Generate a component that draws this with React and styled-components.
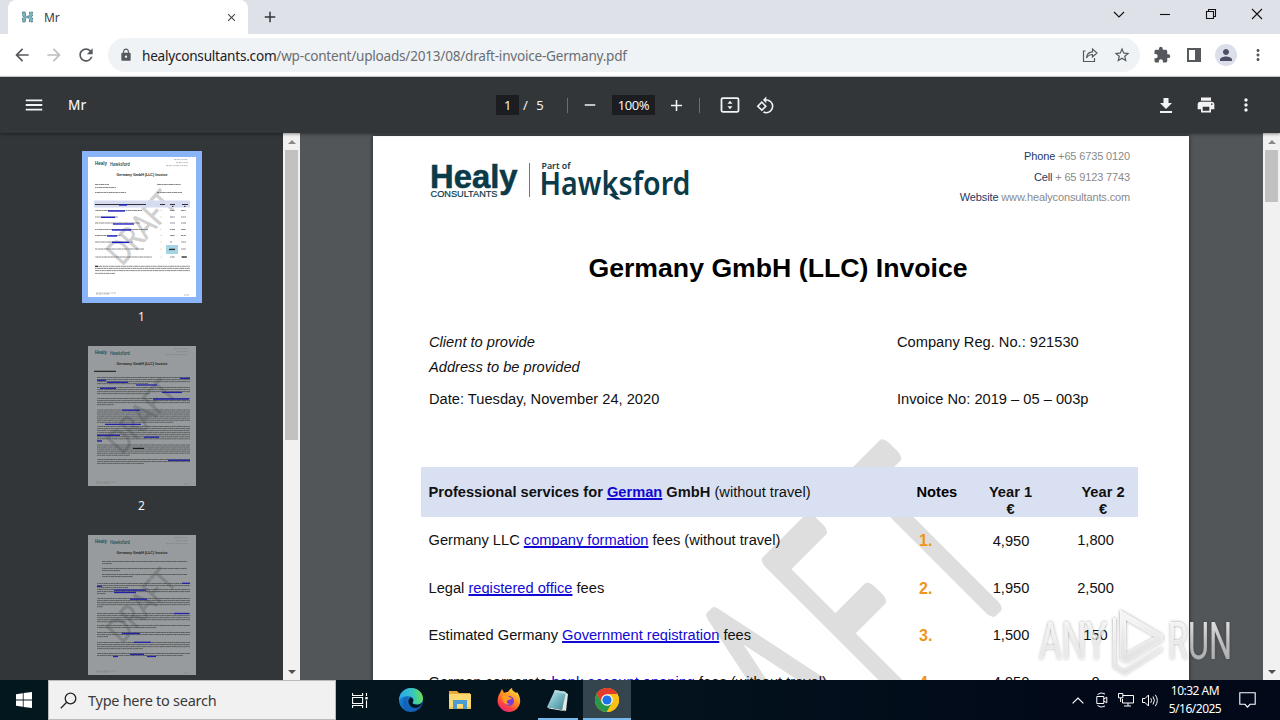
import React from "react";
import styled, { createGlobalStyle } from "styled-components";
import {
  MdMenu, MdArrowBack, MdArrowForward, MdRefresh, MdLock, MdExtension, MdPerson,
  MdMoreVert, MdStarBorder, MdPrint, MdAdd, MdRemove, MdRotate90DegreesCcw, MdClose,
} from "react-icons/md";

const ui = `"Noto Sans", "Open Sans", sans-serif`;
const doc = `"Liberation Sans", Arial, sans-serif`;

const Global = createGlobalStyle`
  * { box-sizing: border-box; }
  body { margin: 0; overflow: hidden; }
  svg { display: block; flex: none; }
`;

const Screen = styled.div`
  position: relative;
  width: 1280px;
  height: 720px;
  display: flex;
  flex-direction: column;
  overflow: hidden;
  font-family: ${ui};
`;

/* ---------- browser chrome ---------- */
const TabStrip = styled.div`
  height: 34px;
  flex: none;
  display: flex;
  align-items: stretch;
  padding-left: 8px;
  background: #dee1e8;
`;
const Tab = styled.div`
  width: 240px;
  display: flex;
  align-items: center;
  padding: 0 10px 0 13px;
  border-radius: 8px 8px 0 0;
  background: #fff;
`;
const TabTitle = styled.span`
  flex: 1;
  margin-left: 10px;
  font-size: 12px;
  letter-spacing: -0.1px;
  color: #3c4043;
`;
const NewTab = styled.div`
  flex: 1;
  display: flex;
  align-items: center;
  padding-left: 13px;
  color: #33363a;
`;
const WindowButton = styled.div`
  width: 46px;
  display: flex;
  align-items: center;
  justify-content: center;
  padding-bottom: 6px;
`;
const AddressBar = styled.div`
  height: 43px;
  flex: none;
  display: flex;
  align-items: center;
  padding: 0 6px;
  background: #fff;
  border-bottom: 1px solid #d4d8da;
`;
const BarButton = styled.div`
  width: 32px;
  display: flex;
  justify-content: center;
  color: ${(p) => (p.$faded ? "#bcbec1" : "#55585c")};
`;
const Omnibox = styled.div`
  width: 1032px;
  height: 34px;
  margin-left: 6px;
  margin-right: 6px;
  padding: 0 2px 0 11px;
  display: flex;
  align-items: center;
  border-radius: 17px;
  background: #f0f3f5;
  color: #55585c;
`;
const Url = styled.div`
  flex: 1;
  margin-left: 9px;
  font-size: 13.6px;
  letter-spacing: -0.24px;
  white-space: nowrap;
  color: #6a6e73;
  b { font-weight: 400; color: #202124; }
`;
const Avatar = styled.div`
  width: 22px;
  height: 22px;
  border-radius: 50%;
  background: #dcdfe9;
  color: #4a4f66;
  display: flex;
  align-items: center;
  justify-content: center;
`;

/* ---------- pdf viewer ---------- */
const PdfBar = styled.div`
  height: 56px;
  flex: none;
  display: flex;
  align-items: center;
  background: #323639;
  color: #f1f3f4;
  font-size: 13px;
  z-index: 1;
  box-shadow: 0 1px 3px rgba(0, 0, 0, 0.45);
`;
const BarSlot = styled.div`
  width: ${(p) => p.$w}px;
  display: flex;
  align-items: center;
  justify-content: ${(p) => p.$align || "center"};
`;
const PageCount = styled.span`
  padding-left: 4px;
  word-spacing: 5px;
`;
const DocName = styled.div`
  width: 412px;
  font-size: 13.5px;
  font-weight: 500;
`;
const Field = styled.div`
  width: ${(p) => p.$w}px;
  height: 20px;
  display: flex;
  align-items: center;
  justify-content: center;
  background: #1b1d20;
  letter-spacing: -0.4px;
`;
const Divider = styled.div`
  width: 1px;
  height: 15px;
  background: #6c6f72;
`;
const Body = styled.div`
  height: 547px;
  flex: none;
  display: flex;
`;
const Sidebar = styled.div`
  width: 283px;
  display: flex;
  flex-direction: column;
  align-items: center;
  padding-top: 18px;
  background: #323639;
  color: #f1f3f4;
  font-size: 12px;
  overflow: hidden;
`;
const Thumb = styled.div`
  flex: none;
  height: ${(p) => (p.$active ? 152 : 140)}px;
  padding: ${(p) => (p.$active ? 6 : 0)}px;
  background: ${(p) => (p.$active ? "#8ab4f8" : "none")};
`;
const ThumbLabel = styled.div`
  flex: none;
  height: ${(p) => p.$h}px;
  padding-top: ${(p) => p.$top}px;
  line-height: 16px;
`;
const ScrollTrack = styled.div`
  width: 17px;
  flex: none;
  display: flex;
  flex-direction: column;
  align-items: center;
  background: #f1f1f1;
`;
const ScrollThumb = styled.div`
  width: 13px;
  height: ${(p) => p.$h}px;
  background: #c1c1c1;
`;
const Arrow = styled.div`
  width: 17px;
  height: 17px;
  display: flex;
  align-items: center;
  justify-content: center;
  margin-top: ${(p) => (p.$end ? "auto" : 0)};
`;
const Viewer = styled.div`
  width: 963px;
  display: flex;
  padding: 3px 0 0 73px;
  background: #525659;
  overflow: hidden;
`;

/* ---------- invoice sheet ---------- */
const Sheet = styled.div`
  position: relative;
  width: 816px;
  height: 1056px;
  flex: none;
  background: #fff;
  color: #111;
  font-family: ${doc};
  font-size: 14.67px;
  box-shadow: 0 0 4px rgba(0, 0, 0, 0.65);
`;
const Layer = styled.svg`
  position: absolute;
  left: 0;
  top: 0;
`;
const Content = styled.div`
  position: relative;
  display: flex;
  flex-direction: column;
`;
const Letterhead = styled.div`
  height: 102px;
  display: flex;
  justify-content: space-between;
  padding: 10px 59px 0 56px;
`;
const LogoBox = styled.div`
  padding-top: 12px;
`;
const Contacts = styled.div`
  display: flex;
  flex-direction: column;
  align-items: flex-end;
  font-size: 11px;
  letter-spacing: -0.14px;
  line-height: 20.5px;
  color: #8a8a8a;
  b { font-weight: 400; color: #1f3864; }
`;
const Title = styled.h1`
  margin: 0;
  height: 92px;
  padding: 15px 6px 0 0;
  text-align: center;
  font-size: 26.67px;
  line-height: 30px;
  color: #000;
`;
const MetaRow = styled.div`
  height: ${(p) => p.$h}px;
  display: flex;
  line-height: 24px;
  padding-left: 56px;
  font-style: ${(p) => (p.$italic ? "italic" : "normal")};
  span:first-child { width: 468px; }
`;
const Row = styled.div`
  height: ${(p) => p.$h}px;
  display: grid;
  grid-template-columns: 488px 56px 90px 83px;
  margin-left: 48px;
  width: 717px;
  padding-top: ${(p) => p.$top}px;
  line-height: 17px;
  font-weight: ${(p) => (p.$head ? 700 : 400)};
  background: ${(p) => (p.$head ? "#d9e0f2" : "transparent")};
`;
const Service = styled.div`
  padding-left: 7.5px;
  white-space: nowrap;
  span { font-weight: 400; }
`;
const Link = styled.a`
  color: #1208d4;
  text-decoration: underline;
  text-decoration-thickness: 2px;
  text-underline-offset: 1px;
  text-decoration-skip-ink: none;
`;
const Note = styled.div`
  padding-left: ${(p) => (p.$head ? 7.5 : 10)}px;
  color: ${(p) => (p.$head ? "#000" : "#f0941a")};
  font-size: ${(p) => (p.$head ? 14.67 : 16)}px;
  font-weight: 700;
`;
const Amount = styled.div`
  text-align: center;
  padding-left: ${(p) => p.$left || 0}px;
  padding-right: ${(p) => p.$right || 0}px;
  padding-top: ${(p) => p.$drop || 0}px;
`;

/* ---------- taskbar ---------- */
const Taskbar = styled.div`
  height: 40px;
  flex: none;
  display: flex;
  background: linear-gradient(90deg, #03171f 0%, #03131d 50%, #020919 85%);
  color: #fff;
`;
const Task = styled.div`
  width: ${(p) => p.$w || 48}px;
  display: flex;
  align-items: center;
  justify-content: center;
  background: ${(p) => (p.$active ? "#35454e" : "none")};
  box-shadow: ${(p) => (p.$open ? "inset 0 -2px 0 #76b9ed" : "none")};
`;
const SearchBox = styled.div`
  width: 288px;
  display: flex;
  align-items: center;
  gap: 11px;
  padding-left: 11px;
  border: 1px solid #b9b9b9;
  background: #f1f1f1;
  color: #3a3a3a;
  font-size: 14.5px;
  letter-spacing: -0.27px;
`;
const Gap = styled.div`
  flex: 1;
`;
const Clock = styled.div`
  width: 66px;
  font-size: 12px;
  line-height: 18px;
  letter-spacing: -0.5px;
  text-align: center;
  padding-top: 2px;
  white-space: nowrap;
`;
const Brand = styled.svg`
  position: absolute;
  left: 1030px;
  top: 600px;
`;

const Triangle = ({ down, dark }) => (
  <svg width="8" height="4" viewBox="0 0 8 4">
    <path d={down ? "M0 0h8L4 4z" : "M0 4h8L4 0z"} fill={dark ? "#505050" : "#8a8a8a"} />
  </svg>
);

const Logo = () => (
  <svg width="264" height="46" viewBox="0 0 264 46" fill="#0b3a48">
    <text x="1" y="30" fontFamily="Liberation Sans" fontWeight="700" fontSize="34" textLength="87.5" lengthAdjust="spacingAndGlyphs" stroke="#0b3a48" strokeWidth=".6">Healy</text>
    <text x="1.5" y="39.2" fontFamily="Liberation Sans" fontSize="9.2" textLength="67" lengthAdjust="spacingAndGlyphs" stroke="#0b3a48" strokeWidth=".2">CONSULTANTS</text>
    <path d="M100.500 5v34" stroke="#5d7f8a" strokeWidth="1" />
    <text x="112.500" y="10.500" fontFamily="Noto Sans" fontWeight="600" fontSize="8.4" textLength="29" lengthAdjust="spacingAndGlyphs">Part of</text>
    <text x="110.500" y="37" fontFamily="Noto Sans" fontWeight="600" fontSize="32" textLength="151" lengthAdjust="spacingAndGlyphs">Hawksford</text>
    <path d="M184 35l8 6.500h-5l-7-5z" />
  </svg>
);

const draftLetters = [
  { c: "A", u: 70, anchor: "middle", s: 0.51 },
  { c: "F", u: 130, anchor: "start", s: 0.54 },
  { c: "T", u: 272, anchor: "middle", s: 0.53 },
];
const DraftMark = () => (
  <Layer width="816" height="560">
    <g transform="translate(-373 -136) rotate(-45)" fill="#dedede" stroke="#dedede" strokeWidth="14" strokeLinejoin="round" fontFamily="Lato" fontWeight="300" fontSize="267">
      {draftLetters.map((l) => (
        <text key={l.c} textAnchor={l.anchor} vectorEffect="non-scaling-stroke" transform={`translate(${l.u} 1131) scale(${l.s} 1)`}>{l.c}</text>
      ))}
    </g>
  </Layer>
);

/* Miniature pages: text lines as [y, x1, x2], links in the same form. */
const MiniPage = ({ dim, lines, links, dark = [], children }) => (
  <svg width="108" height="140" viewBox="0 0 108 140">
    <rect width="108" height="140" fill={dim ? "#989b9d" : "#fff"} />
    <text x="56" y="83" transform="rotate(-48 54 74)" textAnchor="middle" fontFamily="Lato" fontSize="34" textLength="84" lengthAdjust="spacingAndGlyphs" fill={dim ? "#808487" : "#d0d0d0"} stroke={dim ? "#808487" : "#d0d0d0"} strokeWidth=".5">DRAFT</text>
    {children}
    <text x="7" y="8.4" fontFamily="Liberation Sans" fontWeight="700" fontSize="5.6" textLength="12" lengthAdjust="spacingAndGlyphs" fill="#245057">Healy</text>
    <text x="22" y="8.800" fontFamily="Noto Sans" fontWeight="600" fontSize="6" textLength="20" lengthAdjust="spacingAndGlyphs" fill="#245057">Hawksford</text>
    <text x="54" y="19.400" textAnchor="middle" fontFamily="Liberation Sans" fontWeight="700" fontSize="4.2" textLength="51" lengthAdjust="spacingAndGlyphs" fill="#222">Germany GmbH (LLC) Invoice</text>
    <g stroke="#777" strokeWidth=".6" strokeDasharray="2 .5 3 .7 1 .5" opacity=".8">
      <path d="M86 2.600h14M88 5.600h12M78 8.600h22M8 136h20M8 137h14M96 138h5" />
    </g>
    <g stroke={dim ? "#3f4244" : "#555"} strokeWidth=".8" strokeDasharray="3 .4 1.500 .3 4 .4 2 .3" opacity=".85">
      {lines.map(([y, a, b], i) => <path key={i} d={`M${a} ${y}H${b}`} strokeDashoffset={i * 1.7} />)}
    </g>
    <g stroke={dim ? "#2222a8" : "#1818c8"} strokeWidth="1.3">
      {links.map(([y, a, b], i) => <path key={i} d={`M${a} ${y}H${b}`} />)}
    </g>
    <g stroke="#111" strokeWidth="1">
      {dark.map(([y, a, b], i) => <path key={i} d={`M${a} ${y}H${b}`} />)}
    </g>
  </svg>
);
const block = (from, count, a = 9, b = 102, last = 60) =>
  Array.from({ length: count }, (_, i) => [from + i * 2.05, a, i === count - 1 ? last : b]);

const rowsY = [53.5, 60, 66, 72.5, 78.5, 85, 92, 100];
const MiniInvoice = () => (
  <MiniPage
    lines={[
      [27.5, 7, 21], [30.5, 7, 28], [35.5, 7, 38], [27.5, 69, 93], [35.5, 69, 94],
      ...rowsY.map((y, i) => [y, 7, [54, 30, 52, 60, 33, 45, 56, 64][i]]),
      ...rowsY.map((y, i) => [y, 82, i === 5 ? 84 : 87]),
      ...rowsY.map((y) => [y, 93, 98]),
      [109.3, 7, 102], [111.4, 7, 102], [113.6, 7, 102], [116.4, 7, 27],
    ]}
    links={[[48, 31, 39], [54, 20, 37], [60.3, 13, 27], [67, 25, 46], [73, 24, 43], [79, 19, 29], [85.4, 24, 41]]}
    dark={[[109.3, 7, 10], [100, 94, 99]]}
  >
    <rect x="6" y="43.500" width="96" height="7" fill="#d5dcf1" />
    <path d="M7 47.500H58M72 47.500h5M82 47.500h5M94 47.500h6M84 49.400h1.500M96 49.400h1.500" stroke="#333" strokeWidth="1" />
    <rect x="78" y="88" width="12" height="9" fill="#a5d4e2" />
    <path d="M81 92.500h6" stroke="#222" strokeWidth="1.200" />
    {rowsY.map((y) => <circle key={y} cx="73" cy={y} r=".5" fill="#e9a64a" />)}
  </MiniPage>
);
const MiniNotes = () => (
  <MiniPage dim
    lines={[
      ...block(31.5, 4, 9, 102, 60), ...block(41.5, 4, 9, 102, 62), ...block(52.5, 4, 9, 102, 26),
      ...block(64, 7, 9, 102, 85), ...block(80.5, 8, 9, 102, 14), ...block(99, 6, 9, 102, 42), ...block(113.5, 3, 9, 102, 56),
    ]}
    links={[[32.3, 92, 102], [34.3, 9, 18], [36.3, 19, 40], [39, 48, 69], [42.3, 12, 28], [46.4, 74, 94], [53, 65, 101], [64.2, 34, 52], [78.3, 17, 53], [89.3, 9, 32], [91.2, 56, 71], [95, 9, 14], [114.3, 80, 102]]}
    dark={[[25.3, 6, 28], [102.4, 45, 56]]}
  />
);
const MiniTerms = () => (
  <MiniPage dim
    lines={[
      ...block(26.5, 2, 14, 99, 24), ...block(33.5, 2, 14, 99, 32), ...block(39.5, 2, 14, 99, 45), ...block(48.5, 3, 9, 102, 40),
      ...block(54.5, 3, 9, 102, 18), ...block(63.5, 5, 9, 102, 15), ...block(78.5, 5, 9, 102, 38), ...block(90.5, 2, 9, 102, 68),
      ...block(97.5, 3, 9, 102, 20), ...block(107.5, 4, 9, 102, 55), ...block(118.5, 2, 9, 102, 95),
    ]}
    links={[[48.3, 94, 102], [51.3, 9, 14], [55.2, 26, 58], [57.5, 26, 48], [64.2, 42, 59], [78.5, 86, 101], [98.5, 34, 52], [107.3, 46, 63], [119.4, 42, 56], [121.5, 25, 30], [121.5, 59, 68]]}
  />
);

const services = [
  { pre: "Germany LLC ", link: "company formation", post: " fees (without travel)", y1: "4,950", y2: "1,800", h: 48, d1: 1 },
  { pre: "Legal ", link: "registered office", post: " fees", y1: "1,950", y2: "2,500", h: 47 },
  { pre: "Estimated Germany ", link: "Government registration", post: " fees", y1: "1,500", y2: "150", h: 47 },
  { pre: "German corporate ", link: "bank account opening", post: " fees (without travel)", y1: "4,950", y2: "0", h: 47 },
];

const Win = ({ d }) => (
  <svg width="12" height="12" viewBox="0 0 12 12" fill="none" stroke="#111" strokeWidth="1.1"><path d={d} /></svg>
);

const EdgeIcon = () => (
  <svg width="26" height="26" viewBox="0 0 26 26">
    <defs>
      <linearGradient id="eg" x1="0" x2="1" y1=".4" y2=".3"><stop stopColor="#2aa7e8" /><stop offset=".55" stopColor="#35c5c3" /><stop offset="1" stopColor="#6fe04b" /></linearGradient>
      <linearGradient id="eb" x1="0" x2="1" y2="1"><stop stopColor="#1c8ee0" /><stop offset="1" stopColor="#0d4e9e" /></linearGradient>
    </defs>
    <circle cx="13" cy="13" r="12" fill="url(#eb)" />
    <path d="M1.2 12C2 5 7 1 13 1c7 0 12 5 12 10.500 0 4-3 6-6 6-3 0-5-1-4-2.500 1.500-2 .5-5-3-5.600C7 8.500 2 10 1.200 14z" fill="url(#eg)" />
    <path d="M9 13c-1 6 4 10 10 9-5 4-13 2-14-5-.4-4 2-7 5-7.500C9.500 10.500 9 12 9 13z" fill="#1264b8" />
    <path d="M12 10.500c3 .2 4 3 2.600 4.800-.8 1.500 2 2.500 4.600 2.400 2-.1 3.800-1 5-2.500-.8 3-3 5-5.500 5.500-5 1-9.500-3.500-8-8z" fill="#03141e" />
  </svg>
);
const FolderIcon = () => (
  <svg width="24" height="22" viewBox="0 0 24 22">
    <path d="M1 2h8l2 2h11v16H1z" fill="#e8a93a" /><path d="M1 5h22v14H1z" fill="#fbd970" />
    <path d="M5 20v-9h14v9h-4v-5H9v5z" fill="#4a9cd3" /><path d="M1 18h4v2H1zM19 18h4v2h-4z" fill="#f3c24f" />
  </svg>
);
const FirefoxIcon = () => (
  <svg width="24" height="24" viewBox="0 0 24 24">
    <defs><linearGradient id="ff" x1=".8" x2=".2" y1="0" y2="1"><stop stopColor="#ffe14a" /><stop offset=".45" stopColor="#ff8a1e" /><stop offset=".75" stopColor="#ff3f44" /><stop offset="1" stopColor="#e0218a" /></linearGradient></defs>
    <path d="M3 5l2-4 2 4c1-1 3-1 4-1C12 2 13 1 15 0c0 2 1 3 3 4l1 1 1-1c3 4 3.500 8 3 11-1 5-5.500 9-11 9S1 19 .6 14C.4 10 1.500 7 3 5z" fill="url(#ff)" />
    <circle cx="12" cy="13" r="5" fill="#7b3bd8" />
    <path d="M5 8c3-2 6-1 7 1l3 1c-1 2-3 1.500-4.500 2.500C9 14 10 16 13 16c-4 2-8-1-8-8z" fill="#ff9a22" />
  </svg>
);
const NotepadIcon = () => (
  <svg width="24" height="24" viewBox="0 0 24 24">
    <defs><linearGradient id="np" x2="1" y2="1"><stop stopColor="#d9f2f4" /><stop offset=".5" stopColor="#79b8c3" /><stop offset="1" stopColor="#3d8593" /></linearGradient></defs>
    <path d="M17 3l5 3-2 17-4-1z" fill="#e3e7e3" /><path d="M9 2l11 2-4 18L1 19z" fill="url(#np)" />
    <path d="M9 2l11 2-.4 2L8 4z" fill="#b8d9dc" /><path d="M1 19l15 3 3 1.200L3 20.500z" fill="#eef1ee" />
  </svg>
);
const ChromeIcon = () => (
  <svg width="24" height="24" viewBox="-12 -12 24 24">
    <circle r="12" fill="#fbc116" />
    <path d="M-10.400-6A12 12 0 0 1 10.400-6L0-5.500-5 2.800z" fill="#e33b2e" />
    <path d="M-10.400-6A12 12 0 0 0-.2 12L5 2.800-5 2.800z" fill="#279847" />
    <path d="M10.400-6A12 12 0 0 1-.2 12L5 2.800 0-6z" fill="#fbc116" />
    <circle r="5.800" fill="#fff" /><circle r="4.600" fill="#1a73e8" />
  </svg>
);

export default function App() {
  return (
    <Screen>
      <Global />
      <TabStrip>
        <Tab>
          <svg width="13" height="12" viewBox="0 0 13 12"><path d="M1.500 1h3v3.500l2 .8 2-.8V1h3v4L9.800 6l1.700 1v4h-3V7.500l-2-.8-2 .8V11h-3V7l1.700-1-1.700-1z" fill="#7fb3c0" stroke="#477785" strokeWidth=".8" strokeDasharray="3 1" /></svg>
          <TabTitle>Mr</TabTitle>
          <MdClose size={13} color="#44474b" />
        </Tab>
        <NewTab><MdAdd size={18} /></NewTab>
        <WindowButton><Win d="M1 4l5 5 5-5" /></WindowButton>
        <WindowButton><Win d="M1 6.500h10" /></WindowButton>
        <WindowButton><Win d="M1.500 3.500h7v7h-7zM3.500 3.500v-2h7v7h-2" /></WindowButton>
        <WindowButton><Win d="M1 1l10 10M11 1L1 11" /></WindowButton>
      </TabStrip>
      <AddressBar>
        <BarButton><MdArrowBack size={20} /></BarButton>
        <BarButton $faded><MdArrowForward size={20} /></BarButton>
        <BarButton><MdRefresh size={20} /></BarButton>
        <Omnibox>
          <MdLock size={14} />
          <Url><b>healyconsultants.com</b>/wp-content/uploads/2013/08/draft-invoice-Germany.pdf</Url>
          <BarButton>
            <svg width="16" height="16" viewBox="0 0 16 16" fill="none" stroke="#55585c" strokeWidth="1.200"><path d="M3.500 4H1.500v10.500h11V11M4.500 11c.3-4 2.300-6 6-6.200V2l4.500 4-4.500 4V7.500C7.500 7.500 6 8.500 4.500 11z" /></svg>
          </BarButton>
          <BarButton><MdStarBorder size={18} /></BarButton>
        </Omnibox>
        <BarButton><MdExtension size={18} /></BarButton>
        <BarButton><svg width="14" height="14" viewBox="0 0 14 14"><path d="M0 0h14v14H0zM2 2v10h6V2z" fillRule="evenodd" fill="#55585c" /></svg></BarButton>
        <BarButton><Avatar><MdPerson size={18} /></Avatar></BarButton>
        <BarButton><MdMoreVert size={18} /></BarButton>
      </AddressBar>

      <PdfBar>
        <BarSlot $w={68}><MdMenu size={22} /></BarSlot>
        <DocName>Mr</DocName>
        <BarSlot $w={16} />
        <Field $w={23}>1</Field>
        <BarSlot $w={48} $align="flex-start"><PageCount>/ 5</PageCount></BarSlot>
        <Divider />
        <BarSlot $w={44}><MdRemove size={18} /></BarSlot>
        <Field $w={43}>100%</Field>
        <BarSlot $w={43}><MdAdd size={19} /></BarSlot>
        <BarSlot $w={1} />
        <Divider />
        <BarSlot $w={60}>
          <svg width="20" height="16" viewBox="0 0 20 16"><rect x="1.500" y="1.200" width="17" height="13.600" rx="1.200" fill="none" stroke="#f1f3f4" strokeWidth="1.800" /><path d="M10 3.800l2.500 3h-5zM10 12.200l2.500-3h-5z" fill="#f1f3f4" /></svg>
        </BarSlot>
        <BarSlot $w={11}><MdRotate90DegreesCcw size={19} /></BarSlot>
        <Gap />
        <BarSlot $w={40}><svg width="14" height="15" viewBox="0 0 14 15"><path d="M4.500 0h5v5H13l-6 6-6-6h3.500zM1 13h12v2H1z" fill="#f1f3f4" /></svg></BarSlot>
        <BarSlot $w={40}><MdPrint size={20} /></BarSlot>
        <BarSlot $w={40}><MdMoreVert size={20} /></BarSlot>
        <BarSlot $w={14} />
      </PdfBar>

      <Body>
        <Sidebar>
          <Thumb $active><MiniInvoice /></Thumb>
          <ThumbLabel $h={43} $top={6}>1</ThumbLabel>
          <Thumb><MiniNotes /></Thumb>
          <ThumbLabel $h={49} $top={12}>2</ThumbLabel>
          <Thumb><MiniTerms /></Thumb>
        </Sidebar>
        <ScrollTrack>
          <Arrow><Triangle /></Arrow>
          <ScrollThumb $h={290} />
          <Arrow $end><Triangle down dark /></Arrow>
        </ScrollTrack>
        <Viewer>
          <Sheet>
            <DraftMark />
            <Content>
              <Letterhead>
                <LogoBox><Logo /></LogoBox>
                <Contacts>
                  <div><b>Phone</b> +65 6735 0120</div>
                  <div><b>Cell</b> + 65 9123 7743</div>
                  <div><b>Website</b> www.healyconsultants.com</div>
                </Contacts>
              </Letterhead>
              <Title>Germany GmbH (LLC) Invoice</Title>
              <MetaRow $h={25}><span><i>Client to provide</i></span><span>Company Reg. No.: 921530</span></MetaRow>
              <MetaRow $h={32} $italic><span>Address to be provided</span></MetaRow>
              <MetaRow $h={80}><span>Date: Tuesday, November 24, 2020</span><span>Invoice No: 2019 – 05 – 003p</span></MetaRow>
              <Row $head $h={50} $top={17}>
                <Service>Professional services for <Link>German</Link> GmbH <span>(without travel)</span></Service>
                <Note $head>Notes</Note>
                <Amount $left={1}>Year 1<br />€</Amount>
                <Amount $left={13}>Year 2<br />€</Amount>
              </Row>
              {services.map((s, i) => (
                <Row key={s.link} $h={s.h} $top={15}>
                  <Service>{s.pre}<Link>{s.link}</Link>{s.post}</Service>
                  <Note>{i + 1}.</Note>
                  <Amount $left={2} $drop={s.d1}>{s.y1}</Amount>
                  <Amount $right={2}>{s.y2}</Amount>
                </Row>
              ))}
            </Content>
          </Sheet>
        </Viewer>
        <ScrollTrack>
          <Arrow><Triangle /></Arrow>
          <ScrollThumb $h={52} />
          <Arrow $end><Triangle down dark /></Arrow>
        </ScrollTrack>
      </Body>

      <Taskbar>
        <Task>
          <svg width="16" height="16" viewBox="0 0 16 16" fill="#fff"><path d="M0 2.200L6.800 1.200V7.600H0zM7.600 1.100L16 0v7.600H7.600zM0 8.400h6.800v6.400L0 13.800zM7.600 8.400H16V16l-8.400-1.100z" /></svg>
        </Task>
        <SearchBox>
          <svg width="17" height="17" viewBox="0 0 17 17" fill="none" stroke="#222" strokeWidth="1.300"><circle cx="10.500" cy="6.500" r="5.300" /><path d="M6.700 10.300L.8 16.200" /></svg>
          Type here to search
        </SearchBox>
        <Task>
          <svg width="16" height="15" viewBox="0 0 16 15" fill="none" stroke="#fff" strokeWidth="1.100"><path d="M.6 0v2.500h10V0M.6 15v-2.500h10V15M.6 4.500h10v6H.6zM14.500 0v3M14.500 7.500V15" /><path d="M13.300 4h2.400v2.400h-2.400z" fill="#fff" stroke="none" /></svg>
        </Task>
        <Task $w={54}><EdgeIcon /></Task>
        <Task $w={43}><FolderIcon /></Task>
        <Task $w={56}><FirefoxIcon /></Task>
        <Task $w={1} />
        <Task $w={40} $open><NotepadIcon /></Task>
        <Task $w={5} />
        <Task $w={48} $open $active><ChromeIcon /></Task>
        <Gap />
        <Task $w={24}><svg width="12" height="7" viewBox="0 0 12 7" fill="none" stroke="#fff" strokeWidth="1.200"><path d="M.6 6.400L6 1l5.400 5.400" /></svg></Task>
        <Task $w={24}><svg width="12" height="16" viewBox="0 0 12 16" fill="none" stroke="#fff"><path d="M1.500 2.500Q5-.5 9 2M1.500 13.500Q5 16.500 9 14M.8 4.500h7v7h-7zM7.800 7l3-1.800v5.600l-3-1.800" /></svg></Task>
        <Task $w={24}><svg width="16" height="14" viewBox="0 0 16 14" fill="none" stroke="#fff"><path d="M5 2.500h10.500v7.500H4.500V6M10 10v3M6 13h7M.5.5h4.300v4.300H.5zM2.600 5v4" /></svg></Task>
        <Task $w={24}><svg width="17" height="13" viewBox="0 0 17 13" fill="none" stroke="#fff"><path d="M.5 4.500H3L6.500 1v11L3 8.500H.5zM8.800 4.200q1.500 2.300 0 4.600M11 2.500q2.800 4 0 8M13.300.8q4 5.700 0 11.400" /></svg></Task>
        <Clock>10:32 AM<br />5/16/2025</Clock>
        <Task $w={38}><svg width="17" height="16" viewBox="0 0 17 16" fill="none" stroke="#fff" strokeWidth="1.100"><path d="M.8.800h15.400v11.500h-5.200l-2.500 2.800-2.500-2.800H.8z" /></svg></Task>
        <Task $w={14} />
      </Taskbar>

      <Brand width="220" height="80" viewBox="0 0 220 80">
        <defs>
          <linearGradient id="mark" gradientUnits="userSpaceOnUse" x1="0" y1="20" x2="0" y2="70"><stop stopColor="#fff" stopOpacity=".8" /><stop offset=".5" stopColor="#f4f4f4" stopOpacity=".6" /><stop offset="1" stopColor="#ececec" stopOpacity=".5" /></linearGradient>
          <filter id="soft" x="-10%" y="-20%" width="120%" height="140%"><feDropShadow dx="0" dy="0" stdDeviation="1.500" floodColor="#333" floodOpacity=".65" /></filter>
        </defs>
        <g filter="url(#soft)" fill="url(#mark)" fontFamily="Roboto" fontSize="51">
          <text x="9" y="59" textLength="68" lengthAdjust="spacingAndGlyphs">ANY</text>
          <text x="138" y="59" textLength="64" lengthAdjust="spacingAndGlyphs">RUN</text>
          <path fillRule="evenodd" d="M90 10l43 25v6L97 63l-7-3zM96 20v33l29-16z" />
          <path d="M83 18h3v47l8 5 38-23v4L95 75l-12-7z" />
        </g>
      </Brand>
    </Screen>
  );
}
